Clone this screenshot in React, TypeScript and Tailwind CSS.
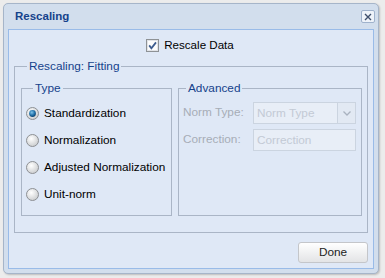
import React from 'react';

const FONT = { fontFamily: '"Liberation Sans", Arial, sans-serif' };

function Radio({ checked }: { checked?: boolean }) {
  return (
    <svg width="13" height="13" viewBox="0 0 13 13" className="shrink-0">
      <defs>
        <radialGradient id="rOff" cx="40%" cy="35%" r="70%">
          <stop offset="0" stopColor="#ffffff" />
          <stop offset="1" stopColor="#c9cbcd" />
        </radialGradient>
        <radialGradient id="rDot" cx="40%" cy="35%" r="70%">
          <stop offset="0" stopColor="#7fc3ea" />
          <stop offset="0.6" stopColor="#1f6fa8" />
          <stop offset="1" stopColor="#0c3c66" />
        </radialGradient>
      </defs>
      <circle cx="6.5" cy="6.5" r="6" fill="url(#rOff)" stroke="#8d9094" strokeWidth="1" />
      {checked && <circle cx="6.5" cy="6.5" r="3.4" fill="url(#rDot)" />}
    </svg>
  );
}

function Checkbox() {
  return (
    <svg width="13" height="13" viewBox="0 0 13 13" className="shrink-0">
      <rect x="0.5" y="0.5" width="12" height="12" fill="#fdfdfd" stroke="#8e9296" />
      <rect x="1.5" y="1.5" width="10" height="10" fill="none" stroke="#e2e4e8" />
      <path d="M3.2 6.4 L5.4 9.2 L10 3.4" fill="none" stroke="#3d5c8f" strokeWidth="1.8" />
    </svg>
  );
}

const RADIOS = ['Standardization', 'Normalization', 'Adjusted Normalization', 'Unit-norm'];

export default function App() {
  return (
    <div className="h-[278px] w-[385px] bg-[#ececec] pl-[3px] pt-[3px]" style={FONT}>
      <div className="flex h-[271px] w-[376px] flex-col rounded-[5px] border border-[#a6b5c9] bg-[#d2deed] px-[4px] pb-[4px] shadow-[1px_1px_2px_rgba(0,0,0,0.2)]">
        <div className="flex h-[25px] items-center justify-between pl-[7px]">
          <span className="text-[11.5px] font-bold text-[#15428b]">Rescaling</span>
          <div className="mr-[-1px] flex h-[13px] w-[14px] items-center justify-center rounded-[2px] border border-[#9fb2cc] bg-[#eef3fa]">
            <svg width="8" height="8" viewBox="0 0 8 8">
              <path d="M1 1 L7 7 M7 1 L1 7" stroke="#3e4f6c" strokeWidth="1.4" />
            </svg>
          </div>
        </div>
        <div className="flex flex-1 flex-col border border-[#99bbe8] bg-[#dfe8f6] px-[5px]">
          <div className="mt-[8px] flex items-center justify-center gap-[5px] pr-[2px]">
            <Checkbox />
            <span className="text-[11.6px] leading-[14px] text-black">Rescale Data</span>
          </div>
          <fieldset className="mt-[7px] flex border border-[#aab5c6] pb-[16px] pl-[6px] pr-[5px] pt-[8px]">
            <legend className="ml-[6px] px-[2px] text-[11.8px] leading-[14px] text-[#15428b]">Rescaling: Fitting</legend>
            <fieldset className="w-[151px] shrink-0 border border-[#aab5c6] pl-[4px] pb-[7px] pt-[5px]">
              <legend className="ml-[7px] px-[2px] text-[11.8px] leading-[14px] text-[#15428b]">Type</legend>
              {RADIOS.map((r, i) => (
                <div key={r} className="flex h-[27px] items-center gap-[5px]">
                  <Radio checked={i === 0} />
                  <span className="text-[11.8px] text-black">{r}</span>
                </div>
              ))}
            </fieldset>
            <fieldset className="ml-[6px] flex-1 border border-[#aab5c6] pl-[4px] pr-[5px] pt-[7px]">
              <legend className="ml-[3px] px-[2px] text-[11.8px] leading-[14px] text-[#15428b]">Advanced</legend>
              <div className="flex h-[22px] items-center">
                <span className="w-[70px] text-[11.8px] text-[#a7adb7]">Norm Type:</span>
                <div className="flex h-[22px] flex-1 border border-[#cbd4e0] bg-[#e8eef7]">
                  <span className="flex-1 pl-[3px] text-[11.8px] leading-[20px] text-[#c3cad5]">Norm Type</span>
                  <div className="flex w-[18px] items-center justify-center border-l border-[#cbd4e0] bg-[#e2e9f3]">
                    <svg width="8" height="5" viewBox="0 0 8 5">
                      <path d="M0.5 0.5 L4 4 L7.5 0.5" fill="none" stroke="#a9b2bf" strokeWidth="1.3" />
                    </svg>
                  </div>
                </div>
              </div>
              <div className="mt-[5px] flex h-[22px] items-center">
                <span className="w-[70px] text-[11.8px] text-[#a7adb7]">Correction:</span>
                <div className="h-[22px] flex-1 border border-[#cbd4e0] bg-[#e8eef7] pl-[3px] text-[11.8px] leading-[20px] text-[#c3cad5]">
                  Correction
                </div>
              </div>
            </fieldset>
          </fieldset>
          <div className="mt-[9px] flex justify-end">
            <button className="h-[21px] w-[70px] rounded-[3px] border border-[#c4c6ca] bg-gradient-to-b from-[#ffffff] to-[#e3e4e6] text-[11.8px] text-[#222]">
              Done
            </button>
          </div>
        </div>
      </div>
    </div>
  );
}
